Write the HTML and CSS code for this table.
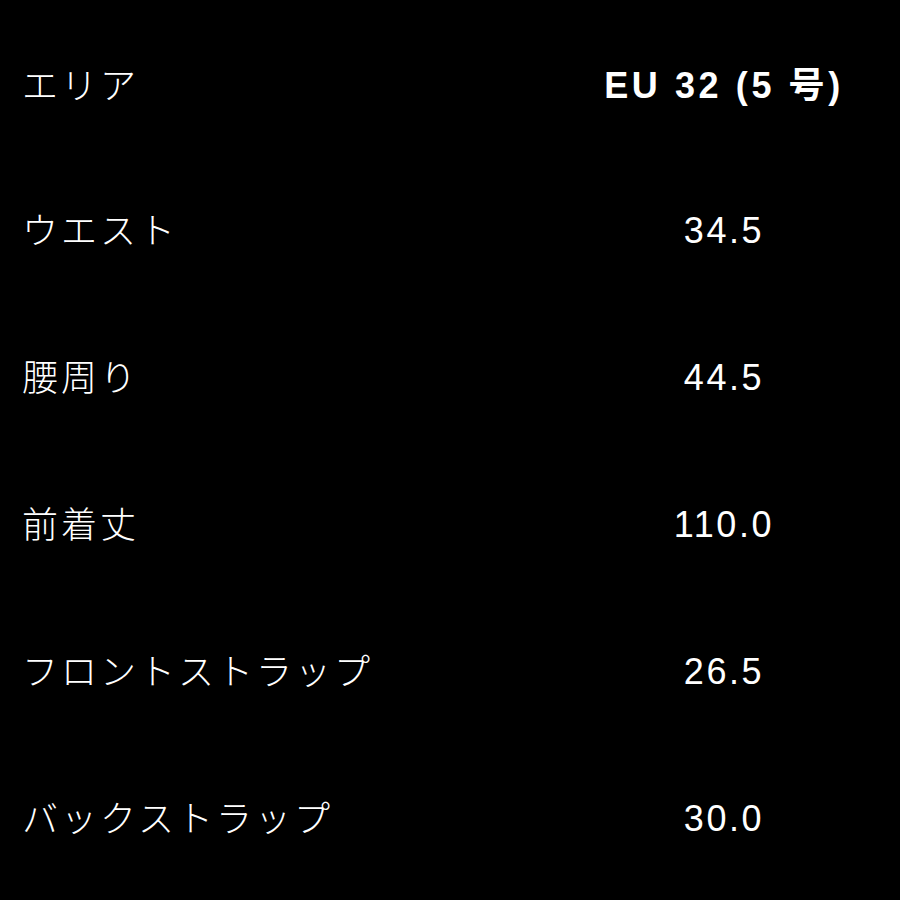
FILE: index.html
```html
<!DOCTYPE html>
<html lang="ja">
<head>
<meta charset="utf-8">
<link rel="stylesheet" href="styles.css">
</head>
<body>
<div class="table">
  <div class="row head">
    <div class="label">エリア</div>
    <div class="value bold">EU 32 (5 号)</div>
  </div>
  <div class="row">
    <div class="label">ウエスト</div>
    <div class="value">34.5</div>
  </div>
  <div class="row">
    <div class="label">腰周り</div>
    <div class="value">44.5</div>
  </div>
  <div class="row">
    <div class="label">前着丈</div>
    <div class="value">110.0</div>
  </div>
  <div class="row">
    <div class="label">フロントストラップ</div>
    <div class="value">26.5</div>
  </div>
  <div class="row">
    <div class="label">バックストラップ</div>
    <div class="value">30.0</div>
  </div>
</div>
</body>
</html>
```
FILE: styles.css
```css
html, body {
  margin: 0;
  padding: 0;
  background: #000;
}
body {
  width: 900px;
  height: 900px;
  overflow: hidden;
  color: #fff;
}
.table {
  display: flex;
  flex-direction: column;
  padding-top: 15px;
}
.row {
  display: grid;
  grid-template-columns: 544px 356px;
  align-items: center;
  height: 147px;
}
.row.head {
  height: 142px;
}
.label {
  padding-left: 22px;
  padding-bottom: 6px;
  font-family: "Noto Sans CJK JP", sans-serif;
  font-size: 36px;
  letter-spacing: 3px;
  font-weight: 300;
  line-height: 1;
}
.value {
  text-align: center;
  padding-left: 4px;
  font-family: "Liberation Sans", "Noto Sans CJK JP", sans-serif;
  font-size: 36px;
  letter-spacing: 2.6px;
  line-height: 1;
}
.value.bold {
  padding-left: 4px;
  font-weight: 700;
  font-size: 36px;
  letter-spacing: 3.6px;
}
```
